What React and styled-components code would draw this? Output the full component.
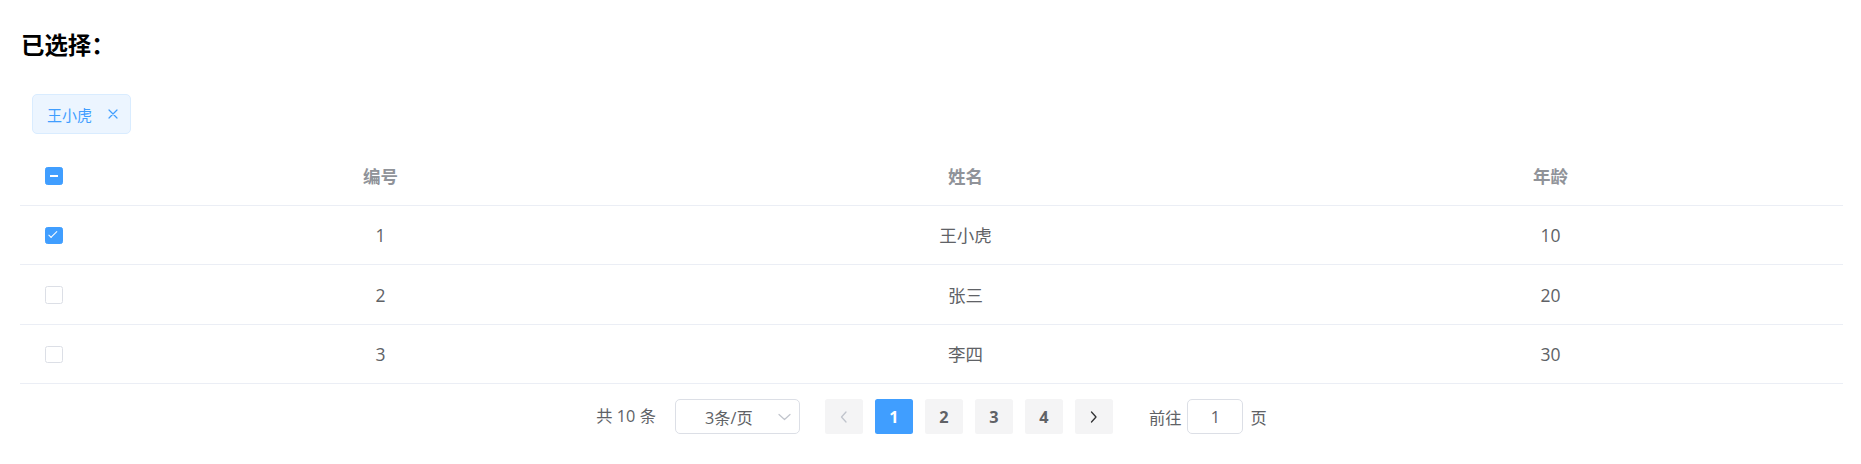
import React from "react";
import styled, { createGlobalStyle, css } from "styled-components";

const GlobalStyle = createGlobalStyle`
  html, body {
    margin: 0;
    padding: 0;
    background: #ffffff;
  }
  body {
    font-family: "Open Sans", "Noto Sans CJK SC", "Microsoft YaHei", sans-serif;
    -webkit-font-smoothing: antialiased;
  }
`;

const Page = styled.div`
  width: 1861px;
  box-sizing: border-box;
  padding: 29px 18px 0 20px;
`;

const Title = styled.h3`
  margin: 0;
  padding-left: 1px;
  font-family: "Noto Sans CJK SC", sans-serif;
  font-size: 23.4px;
  line-height: 30px;
  font-weight: 700;
  color: #000000;
`;

const TagArea = styled.div`
  display: flex;
  gap: 12px;
  margin-top: 35px;
  padding-left: 12px;
`;

const Tag = styled.span`
  display: inline-flex;
  align-items: center;
  box-sizing: border-box;
  height: 40px;
  padding: 0 7px 0 14px;
  background: #ecf5ff;
  border: 1px solid #d9ecff;
  border-radius: 5px;
  color: #409eff;
  font-family: "Noto Sans CJK SC", sans-serif;
  font-size: 15px;
  line-height: 1;
`;

const TagClose = styled.span`
  display: inline-flex;
  align-items: center;
  justify-content: center;
  width: 20px;
  height: 20px;
  margin-left: 11px;
  color: #409eff;
`;

const Table = styled.div`
  margin-top: 12px;
  width: 100%;
`;

const Row = styled.div`
  display: grid;
  grid-template-columns: 68px repeat(3, 1fr);
  align-items: center;
  box-sizing: border-box;
  height: ${(p) => (p.$header ? "60px" : "59.4px")};
  border-bottom: 1px solid #ebeef5;
`;

const Cell = styled.div`
  display: flex;
  align-items: center;
  justify-content: center;
  font-size: 17.5px;
  line-height: 28px;
  color: ${(p) => (p.$header ? "#909399" : "#606266")};
  font-weight: ${(p) => (p.$header ? 700 : 400)};
  font-family: ${(p) =>
    p.$header
      ? `"Noto Sans CJK SC", sans-serif`
      : `"Open Sans", "Noto Sans CJK SC", sans-serif`};
`;

const CheckBox = styled.span`
  position: relative;
  display: inline-block;
  box-sizing: border-box;
  width: 17.5px;
  height: 17.5px;
  border-radius: 2.5px;
  margin-top: 1px;
  ${(p) =>
    p.$state === "none"
      ? css`
          background: #ffffff;
          border: 1px solid #dcdfe6;
        `
      : css`
          background: #409eff;
          border: 1px solid #409eff;
        `}
`;

const Tick = styled.span`
  position: absolute;
  left: 5px;
  top: 1.5px;
  width: 4px;
  height: 8.5px;
  box-sizing: border-box;
  border-right: 1.25px solid #ffffff;
  border-bottom: 1.25px solid #ffffff;
  transform: rotate(45deg);
  transform-origin: center;
`;

const Dash = styled.span`
  position: absolute;
  left: 3.5px;
  right: 3.5px;
  top: 6.5px;
  height: 2px;
  background: #ffffff;
`;

const Pagination = styled.div`
  display: flex;
  justify-content: center;
  align-items: center;
  margin-top: 15px;
  height: 35px;
  font-size: 16.25px;
  color: #606266;
  font-family: "Open Sans", "Noto Sans CJK SC", sans-serif;
`;

const Total = styled.span`
  margin-right: 19px;
  line-height: 35px;
`;

const SizeSelect = styled.div`
  position: relative;
  display: flex;
  align-items: center;
  box-sizing: border-box;
  width: 125px;
  height: 35px;
  padding-left: 29px;
  border: 1px solid #dcdfe6;
  border-radius: 5px;
  color: #606266;
  margin-right: 19px;
`;

const SelectArrow = styled.span`
  position: absolute;
  right: 8px;
  top: 50%;
  transform: translateY(-50%);
  display: flex;
`;

const PagerButton = styled.span`
  display: inline-flex;
  align-items: center;
  justify-content: center;
  width: 38px;
  height: 35px;
  margin: 0 6px;
  border-radius: 2.5px;
  background: ${(p) => (p.$active ? "#409eff" : "#f4f4f5")};
  color: ${(p) => (p.$active ? "#ffffff" : "#606266")};
  font-weight: 700;
  font-size: 16.25px;
  font-family: "Open Sans", sans-serif;
`;

const Jumper = styled.div`
  display: flex;
  align-items: center;
  margin-left: 30px;
`;

const JumpInput = styled.span`
  display: inline-flex;
  align-items: center;
  justify-content: center;
  box-sizing: border-box;
  width: 56px;
  height: 35px;
  margin: 0 7px 0 6px;
  border: 1px solid #dcdfe6;
  border-radius: 5px;
  color: #606266;
`;

const Chevron = ({ dir, color }) => {
  const paths = {
    left: "M6 1 L1.5 6 L6 11",
    right: "M1.5 1 L6 6 L1.5 11",
  };
  return (
    <svg width="8" height="12" viewBox="0 0 8 12" fill="none">
      <path d={paths[dir]} stroke={color} strokeWidth="1.3" strokeLinecap="round" strokeLinejoin="round" />
    </svg>
  );
};

const ChevronDown = () => (
  <svg width="13" height="8" viewBox="0 0 13 8" fill="none">
    <path d="M1 1.5 L6.5 6.5 L12 1.5" stroke="#c0c4cc" strokeWidth="1.2" strokeLinecap="round" strokeLinejoin="round" />
  </svg>
);

const CloseIcon = () => (
  <svg width="10" height="10" viewBox="0 0 10 10" fill="none">
    <path d="M1 1 L9 9 M9 1 L1 9" stroke="#409eff" strokeWidth="1.2" strokeLinecap="round" />
  </svg>
);

const Check = ({ state }) => (
  <CheckBox $state={state}>
    {state === "checked" && <Tick />}
    {state === "half" && <Dash />}
  </CheckBox>
);

const rows = [
  { id: 1, name: "王小虎", age: 10, checked: true },
  { id: 2, name: "张三", age: 20, checked: false },
  { id: 3, name: "李四", age: 30, checked: false },
];

export default function App() {
  return (
    <>
      <GlobalStyle />
      <Page>
        <Title>已选择：</Title>
        <TagArea>
          <Tag>
            王小虎
            <TagClose>
              <CloseIcon />
            </TagClose>
          </Tag>
        </TagArea>
        <Table>
          <Row $header>
            <Cell $header>
              <Check state="half" />
            </Cell>
            <Cell $header>编号</Cell>
            <Cell $header>姓名</Cell>
            <Cell $header>年龄</Cell>
          </Row>
          {rows.map((r) => (
            <Row key={r.id}>
              <Cell>
                <Check state={r.checked ? "checked" : "none"} />
              </Cell>
              <Cell>{r.id}</Cell>
              <Cell>{r.name}</Cell>
              <Cell>{r.age}</Cell>
            </Row>
          ))}
        </Table>
        <Pagination>
          <Total>共 10 条</Total>
          <SizeSelect>
            3条/页
            <SelectArrow>
              <ChevronDown />
            </SelectArrow>
          </SizeSelect>
          <PagerButton>
            <Chevron dir="left" color="#c0c4cc" />
          </PagerButton>
          <PagerButton $active>1</PagerButton>
          <PagerButton>2</PagerButton>
          <PagerButton>3</PagerButton>
          <PagerButton>4</PagerButton>
          <PagerButton>
            <Chevron dir="right" color="#303133" />
          </PagerButton>
          <Jumper>
            前往
            <JumpInput>1</JumpInput>
            页
          </Jumper>
        </Pagination>
      </Page>
    </>
  );
}
